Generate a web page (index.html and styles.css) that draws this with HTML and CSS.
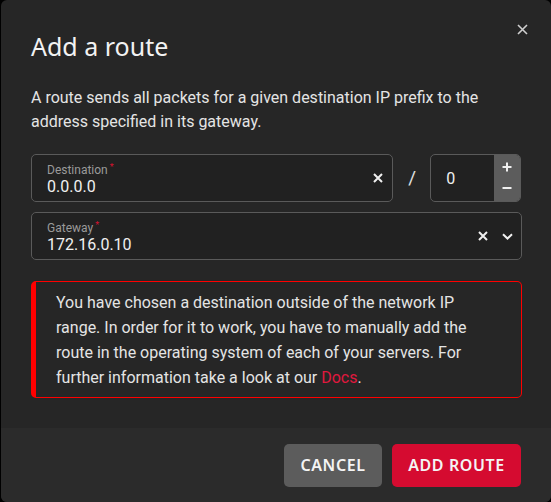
FILE: index.html
```html
<!DOCTYPE html>
<html>
<head>
<meta charset="utf-8">
<link rel="stylesheet" href="styles.css">
</head>
<body>
<div class="dialog">
  <button class="close" aria-label="Close">
    <svg width="11" height="11" viewBox="0 0 11 11"><path d="M1 1L10 10M10 1L1 10" stroke="#cfcfcf" stroke-width="1.6" fill="none"/></svg>
  </button>
  <div class="content">
    <h1 class="title">Add a route</h1>
    <p class="desc">A route sends all packets for a given destination IP prefix to the address specified in its gateway.</p>
    <div class="row">
      <div class="field dest">
        <div class="field-text">
          <div class="label">Destination<span class="req">*</span></div>
          <div class="value">0.0.0.0</div>
        </div>
        <span class="icon clear">
          <svg width="10" height="10" viewBox="0 0 10 10"><path d="M1 1L9 9M9 1L1 9" stroke="#f0f0f0" stroke-width="2" fill="none"/></svg>
        </span>
      </div>
      <div class="slash">/</div>
      <div class="field num">
        <div class="num-value">0</div>
        <div class="stepper">
          <svg width="10" height="10" viewBox="0 0 10 10"><path d="M5 0.5V9.5M0.5 5H9.5" stroke="#f0f0f0" stroke-width="2" fill="none"/></svg>
          <svg width="10" height="10" viewBox="0 0 10 10"><path d="M0.5 5H9.5" stroke="#f0f0f0" stroke-width="2" fill="none"/></svg>
        </div>
      </div>
    </div>
    <div class="field gateway">
      <div class="field-text">
        <div class="label">Gateway<span class="req">*</span></div>
        <div class="value">172.16.0.10</div>
      </div>
      <span class="icon clear">
        <svg width="10" height="10" viewBox="0 0 10 10"><path d="M1 1L9 9M9 1L1 9" stroke="#f0f0f0" stroke-width="2" fill="none"/></svg>
      </span>
      <span class="icon chev">
        <svg width="11" height="7" viewBox="0 0 11 7"><path d="M1 1.2L5.5 5.5L10 1.2" stroke="#f0f0f0" stroke-width="2" fill="none"/></svg>
      </span>
    </div>
    <div class="alert">
      You have chosen a destination outside of the network IP range. In order for it to work, you have to manually add the route in the operating system of each of your servers. For further information take a look at our <a class="link" href="#">Docs</a>.
    </div>
  </div>
  <div class="footer">
    <button class="btn cancel">CANCEL</button>
    <button class="btn primary">ADD ROUTE</button>
  </div>
</div>
</body>
</html>
```

FILE: styles.css
```css
html, body {
  margin: 0;
  padding: 0;
  background: #000;
}
body {
  width: 551px;
  height: 502px;
  overflow: hidden;
  font-family: Roboto, "Liberation Sans", sans-serif;
}
.dialog {
  position: relative;
  margin-left: 1px;
  width: 550px;
  height: 502px;
  background: #262626;
  border-radius: 6px;
  display: flex;
  flex-direction: column;
  overflow: hidden;
}
.close {
  position: absolute;
  top: 23px;
  right: 22px;
  width: 13px;
  height: 13px;
  padding: 0;
  border: 0;
  background: none;
  display: flex;
  align-items: center;
  justify-content: center;
}
.content {
  flex: 1;
  padding: 31px 30px 0 30px;
}
.title {
  margin: 0;
  font-family: "Noto Sans", sans-serif;
  font-weight: 400;
  font-size: 25px;
  line-height: 30px;
  color: #f2f2f2;
}
.desc {
  margin: 25px 0 0 0;
  font-size: 16px;
  line-height: 24px;
  color: #e4e4e4;
}
.row {
  margin-top: 20px;
  display: flex;
  align-items: center;
}
.field {
  box-sizing: border-box;
  height: 48px;
  background: #212121;
  border: 1px solid #5a5a5a;
  border-radius: 5px;
  display: flex;
  align-items: center;
}
.dest {
  width: 363px;
  padding: 0 9px 0 15px;
}
.field-text {
  flex: 1;
}
.label {
  font-size: 12px;
  line-height: 14px;
  color: #9a9a9a;
}
.req {
  color: #d8112f;
  font-size: 9px;
  vertical-align: 4px;
  margin-left: 2px;
}
.value {
  font-size: 16px;
  line-height: 20px;
  color: #f0f0f0;
}
.icon {
  display: flex;
  align-items: center;
  justify-content: center;
}
.slash {
  width: 36px;
  text-align: center;
  color: #e0e0e0;
  font-size: 19px;
  line-height: 20px;
  padding-left: 1px;
}
.num {
  width: 91px;
  overflow: hidden;
  padding-left: 15px;
}
.num-value {
  flex: 1;
  font-size: 16px;
  color: #f0f0f0;
}
.stepper {
  width: 26px;
  height: 100%;
  background: #5c5c5c;
  display: flex;
  flex-direction: column;
  align-items: center;
  justify-content: space-between;
  padding: 7px 0 8px 0;
  box-sizing: border-box;
}
.gateway {
  margin-top: 10px;
  width: 491px;
  padding: 0 8px 0 15px;
}
.gateway .clear {
  margin-right: 14px;
}
.alert {
  margin-top: 21px;
  box-sizing: border-box;
  width: 491px;
  border: 1px solid #ff0000;
  border-left: 5px solid #ff0000;
  border-radius: 5px;
  padding: 8px 20px 7px 20px;
  font-size: 16px;
  line-height: 25px;
  color: #e4e4e4;
}
.link {
  color: #e0183e;
  text-decoration: none;
}
.footer {
  height: 74px;
  background: #2b2b2b;
  display: flex;
  align-items: center;
  justify-content: flex-end;
  gap: 10px;
  padding: 0 30px;
}
.btn {
  height: 43px;
  border: 0;
  border-radius: 5px;
  padding: 0 16px;
  font-family: "Noto Sans", sans-serif;
  font-weight: 600;
  font-size: 16px;
  letter-spacing: 0.6px;
  color: #f4f4f4;
}
.cancel {
  width: 98px;
  background: #5c5c5c;
}
.primary {
  width: 129px;
  background: #d50b30;
}
```
